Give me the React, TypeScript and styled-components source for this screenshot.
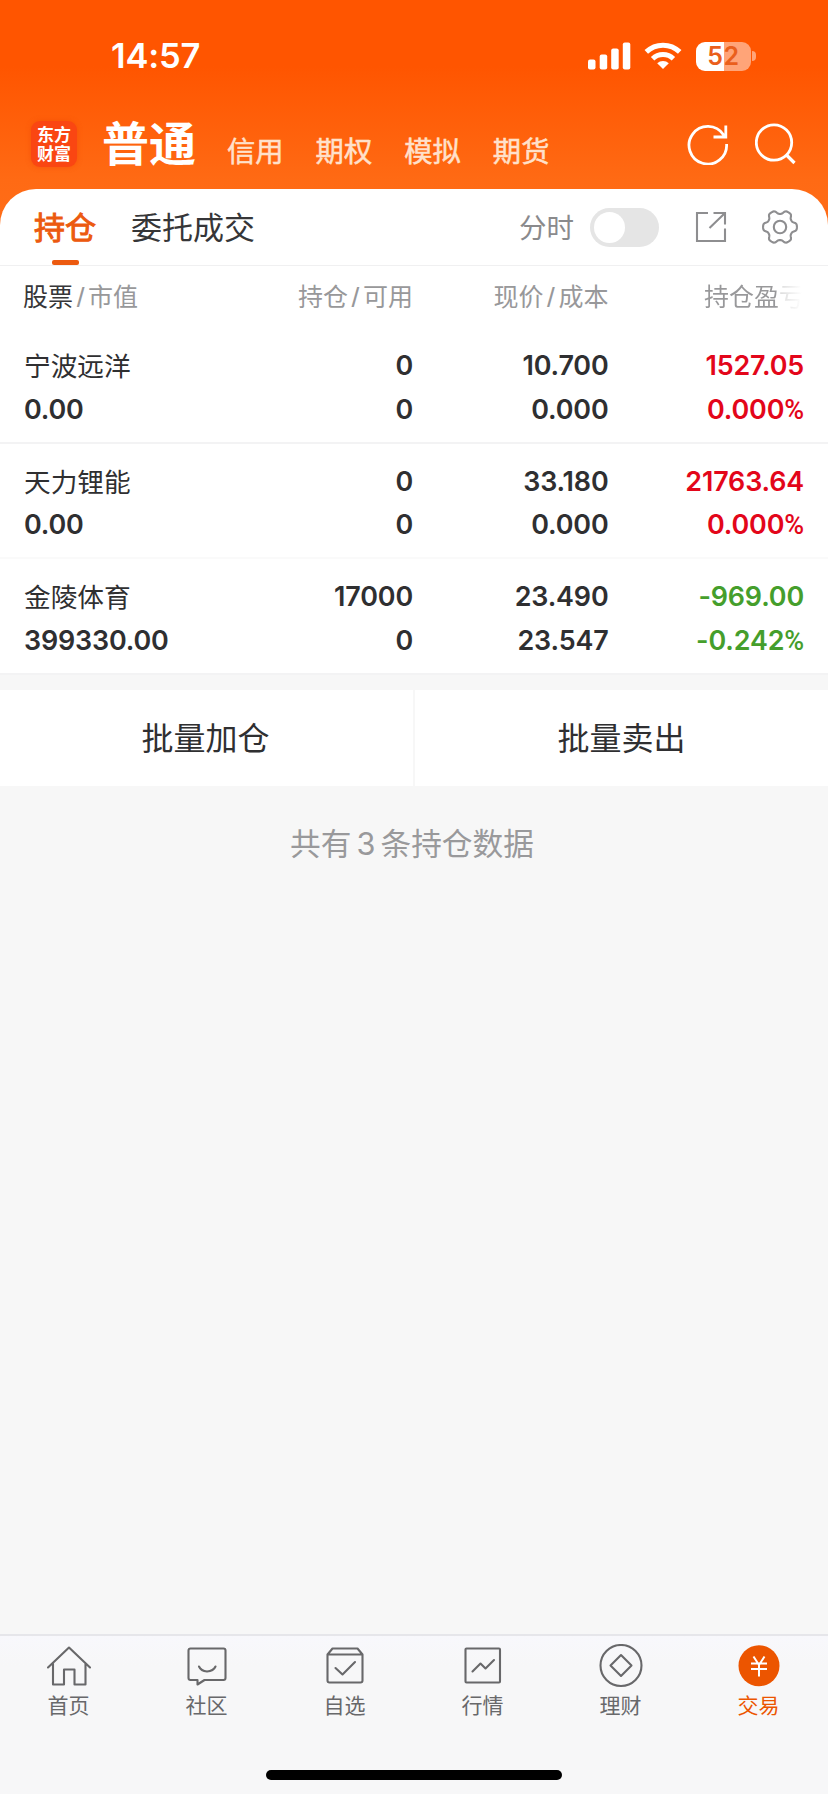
import React from 'react';
import styled, { createGlobalStyle } from 'styled-components';

const GlobalStyle = createGlobalStyle`
  * { box-sizing: border-box; }
  body {
    margin: 0;
    background: #f7f7f8;
    font-family: Inter, "Noto Sans CJK SC", sans-serif;
    color: #2f2f31;
  }
`;

const Screen = styled.div`
  width: 828px;
  height: 1794px;
  display: flex;
  flex-direction: column;
  background: #f7f7f7;
  overflow: hidden;
`;

const Hero = styled.header`
  height: 225px;
  margin-bottom: -36px;
  flex: none;
  background: linear-gradient(#ff5500 0, #ff5500 66px, #ff6a14 180px, #ff6d18 225px);
  color: #fff;
`;

const StatusBar = styled.div`
  height: 112px;
  padding: 0 72px 0 111px;
  display: flex;
  align-items: center;
  justify-content: space-between;
`;

const Clock = styled.span`
  font-size: 34.5px;
  font-weight: 600;
  line-height: 40px;
  letter-spacing: -0.2px;
`;

const StatusIcons = styled.div`
  display: flex;
  align-items: center;
  height: 30px;
`;

const Signal = styled.svg`
  display: block;
  margin-right: 13px;
`;

const Wifi = styled.svg`
  display: block;
  margin-right: 14px;
`;

const Battery = styled.div`
  width: 55px;
  height: 29px;
  border-radius: 9px;
  background: linear-gradient(90deg, #fff 0 28px, #ffa478 28px);
  color: #ea5f1c;
  font-size: 25px;
  font-weight: 600;
  line-height: 29px;
  text-align: center;
  letter-spacing: 0.6px;
`;

const BatteryCap = styled.span`
  width: 4px;
  height: 10px;
  margin-left: 1px;
  border-radius: 0 5px 5px 0;
  background: #ffa478;
`;

const AccountBar = styled.div`
  height: 77px;
  padding: 0 31px;
  display: flex;
  align-items: center;
`;

const Logo = styled.div`
  width: 46px;
  height: 46px;
  margin-top: -13px;
  border-radius: 9px;
  background: #fa4612;
  box-shadow: 0 0 5px rgba(235, 70, 5, 0.5);
  display: flex;
  flex-direction: column;
  align-items: center;
  justify-content: center;
  padding-top: 1px;
  font-size: 17px;
  font-weight: 700;
  line-height: 19px;
`;

const ActiveAccount = styled.span`
  margin: -14px 0 0 25px;
  font-size: 47px;
  line-height: 60px;
  font-weight: 700;
`;

const Account = styled.span<{ $first?: boolean }>`
  margin: 2px 0 0 ${(p) => (p.$first ? 31 : 32)}px;
  font-size: 28.3px;
  line-height: 36px;
  color: #ffe1cb;
  -webkit-text-stroke: 0.5px #ffe1cb;
`;

const HeroActions = styled.div`
  margin: -13px 0 0 auto;
  display: flex;
  gap: 26px;
  svg { display: block; }
`;

const Panel = styled.main`
  flex: none;
  background: #fff;
  border-radius: 36px 36px 0 0;
  overflow: hidden;
`;

const Toolbar = styled.nav`
  height: 77px;
  padding: 0 30px 0 34px;
  display: flex;
  align-items: center;
  border-bottom: 1px solid #f0f0f1;
`;

const ToolTab = styled.div<{ $active?: boolean }>`
  height: 76px;
  margin-right: 35px;
  display: flex;
  flex-direction: column;
  align-items: center;
  font-size: 31px;
  line-height: 78px;
  color: ${(p) => (p.$active ? '#ec5a10' : '#363638')};
  -webkit-text-stroke: ${(p) => (p.$active ? '1px #ec5a10' : '0')};
  &::after {
    content: '';
    display: ${(p) => (p.$active ? 'block' : 'none')};
    width: 27px;
    height: 5px;
    margin-top: -7px;
    border-radius: 2px;
    background: #ec5a10;
    flex: none;
  }
`;

const ToolLabel = styled.span`
  margin-left: auto;
  margin-top: 2px;
  font-size: 27.5px;
  line-height: 36px;
  color: #8a8a8c;
`;

const Toggle = styled.div`
  width: 69px;
  height: 39px;
  margin-left: 16px;
  padding: 4px;
  border-radius: 20px;
  background: #e5e5e5;
  &::before {
    content: '';
    display: block;
    width: 31px;
    height: 31px;
    border-radius: 50%;
    background: #fff;
  }
`;

const ToolIcon = styled.svg<{ $gap: number }>`
  display: block;
  margin-left: ${(p) => p.$gap}px;
`;

const Row = styled.div<{ $head?: boolean; $faint?: boolean }>`
  height: ${(p) => (p.$head ? 62 : 115.5)}px;
  padding: ${(p) => (p.$head ? 0 : '16px')} 24px 0;
  display: grid;
  grid-template-columns: 200px 189px 195.5px 195.5px;
  align-content: ${(p) => (p.$head ? 'center' : 'start')};
  border-bottom: ${(p) => (p.$head ? 0 : 2)}px solid ${(p) => (p.$faint ? '#fafafa' : '#f3f3f4')};
`;

const HeadCell = styled.div<{ $right?: boolean }>`
  display: flex;
  justify-content: ${(p) => (p.$right ? 'flex-end' : 'flex-start')};
  font-size: 25px;
  line-height: 37px;
  color: #98989a;
`;

const Strong = styled.span`
  color: #363638;
  margin-left: -1px;
`;

const Slash = styled.span`
  width: 15px;
  text-align: center;
  font-family: "Liberation Sans", sans-serif;
  font-size: 28px;
`;

const Fading = styled.span`
  color: transparent;
  background: linear-gradient(90deg, #98989a 0 72px, #dedede 77px, #fff 98px);
  background-clip: text;
`;

const Cell = styled.div<{ $tone?: 'up' | 'down'; $left?: boolean }>`
  display: flex;
  flex-direction: column;
  text-align: ${(p) => (p.$left ? 'left' : 'right')};
  font-size: 26.9px;
  line-height: 43.5px;
  font-weight: 600;
  letter-spacing: -0.15px;
  white-space: nowrap;
  color: ${(p) => (p.$tone === 'up' ? '#e3061a' : p.$tone === 'down' ? '#459e2c' : '#2f2f31')};
`;

const Percent = styled.span`
  font-family: Roboto, sans-serif;
  font-size: 27px;
  font-weight: 500;
`;

const StockName = styled.span`
  font-size: 26.7px;
  font-weight: 400;
  letter-spacing: 0;
  position: relative;
  top: 1px;
`;

const Actions = styled.div`
  flex: none;
  margin-top: 15px;
  height: 96px;
  display: grid;
  grid-template-columns: 413px 413px;
  gap: 2px;
`;

const ActionButton = styled.button`
  border: 0;
  padding: 3px 2px 0 0;
  background: #fff;
  font: 400 32px/44px Inter, "Noto Sans CJK SC", sans-serif;
  color: #2f2f31;
  & + & { padding-right: 0; }
`;

const Summary = styled.p`
  flex: 1;
  margin: 0;
  padding: 36px 4px 0 0;
  text-align: center;
  font-size: 30.7px;
  line-height: 44px;
  color: #99999b;
`;

const Count = styled.span`
  margin: 0 5px;
`;

const BottomNav = styled.footer`
  height: 160px;
  flex: none;
  border-top: 2px solid #e6e6ea;
  background: linear-gradient(#f8f8fc, #f7f7f8 30px);
  display: flex;
  flex-direction: column;
  align-items: center;
`;

const NavItems = styled.div`
  width: 100%;
  height: 134px;
  display: flex;
`;

const NavItem = styled.div<{ $active?: boolean }>`
  flex: 1;
  display: flex;
  flex-direction: column;
  align-items: center;
  padding-top: 8px;
  font-size: 21px;
  line-height: 30px;
  color: ${(p) => (p.$active ? '#ec5500' : '#68686a')};
  svg { display: block; margin-bottom: 1px; }
  span { margin-right: 1px; }
`;

const HomeIndicator = styled.div`
  width: 296px;
  height: 10px;
  border-radius: 5px;
  background: #000;
`;

const gearPath =
  Array.from({ length: 120 }, (_, i) => {
    const t = (i / 120) * Math.PI * 2;
    const r = 14.9 + 2.1 * Math.tanh(1.7 * (Math.cos(6 * t) + 0.2));
    return `${i ? 'L' : 'M'}${(18 + r * Math.cos(t)).toFixed(2)} ${(18 + r * Math.sin(t)).toFixed(2)}`;
  }).join('') + 'Z';

type NavIconProps = { children: React.ReactNode };
const NavIcon = ({ children }: NavIconProps) => (
  <svg width="46" height="46" viewBox="0 0 46 46" fill="none" stroke="#68686a" strokeWidth="2.1" strokeLinejoin="round" strokeLinecap="round">
    {children}
  </svg>
);

const navItems = [
  { label: '首页', icon: <path d="M2 23.500 23 3.500 44 23.500M7 19.500V40.500H18V25.500H28.500V40.500H39.500V19.500" /> },
  { label: '社区', icon: <path d="M6.500 4.500H39.500Q41.500 4.500 41.500 6.500V34Q41.500 36 39.500 36H20.500L13.500 40.500V36H6.500Q4.500 36 4.500 34V6.500Q4.500 4.500 6.500 4.500ZM15 22.500Q17 27 23 27.500Q29.500 27 31.500 22.500" /> },
  { label: '自选', icon: <path d="M5.500 10.500 10.500 4.500H35.500L40.500 10.500V36.500Q40.500 38.500 38.500 38.500H7.500Q5.500 38.500 5.500 36.500ZM5.500 10.500H40.500M13.500 24 20.500 30.500 33 18" /> },
  { label: '行情', icon: <><rect x="5.500" y="4.500" width="34.500" height="34" rx="1" /><path d="M12.500 27.500 20.500 19.500 25.500 24.500 34 16" /></> },
  { label: '理财', icon: <><circle cx="23" cy="21.500" r="20.500" /><path d="M23 11 33.500 21.500 23 32 12.500 21.500Z" /></> },
  { label: '交易', icon: <><circle cx="23" cy="21.700" r="20.500" fill="#ec5500" stroke="none" /><path d="M17.500 12.500 23 21 28.500 12.500M23 21V32.500M15 19.500H31M15 25H31" stroke="#fff" strokeWidth="2" strokeLinecap="butt" /></> },
];

type Holding = {
  name: string; value: string; held: string; free: string;
  price: string; cost: string; profit: string; rate: string; tone: 'up' | 'down';
};

const holdings: Holding[] = [
  { name: '宁波远洋', value: '0.00', held: '0', free: '0', price: '10.700', cost: '0.000', profit: '1527.05', rate: '0.000', tone: 'up' },
  { name: '天力锂能', value: '0.00', held: '0', free: '0', price: '33.180', cost: '0.000', profit: '21763.64', rate: '0.000', tone: 'up' },
  { name: '金陵体育', value: '399330.00', held: '17000', free: '0', price: '23.490', cost: '23.547', profit: '-969.00', rate: '-0.242', tone: 'down' },
];

export default function App() {
  return (
    <>
      <GlobalStyle />
      <Screen>
        <Hero>
          <StatusBar>
            <Clock>14:57</Clock>
            <StatusIcons>
              <Signal width="43" height="28" viewBox="0 0 43 28" fill="#fff">
                <rect x="0" y="17.500" width="7.500" height="10" rx="2" />
                <rect x="11.700" y="12.500" width="7.500" height="15" rx="2" />
                <rect x="23.200" y="6.500" width="7.500" height="21" rx="2" />
                <rect x="34.800" y="0.500" width="7.500" height="27" rx="2" />
              </Signal>
              <Wifi width="38" height="28" viewBox="0 0 38 28" fill="none" stroke="#fff" strokeWidth="5">
                <path d="M2.300 9.900A24 24 0 0 1 35.700 9.900" />
                <path d="M8.600 16.700A15 15 0 0 1 29.400 16.700" />
                <path d="M19 27 13.200 21.200A8.500 8.500 0 0 1 24.800 21.200Z" fill="#fff" stroke="none" />
              </Wifi>
              <Battery>52</Battery>
              <BatteryCap />
            </StatusIcons>
          </StatusBar>
          <AccountBar>
            <Logo><span>东方</span><span>财富</span></Logo>
            <ActiveAccount>普通</ActiveAccount>
            <Account $first>信用</Account>
            <Account>期权</Account>
            <Account>模拟</Account>
            <Account>期货</Account>
            <HeroActions>
              <svg width="42" height="42" viewBox="0 0 42 42" fill="none" stroke="#fff" strokeWidth="2.800">
                <path d="M39.600 21A18.800 18.800 0 1 1 36.500 11.800L38 14M38.800 2.500V14H26.500" />
              </svg>
              <svg width="42" height="42" viewBox="0 0 42 42" fill="none" stroke="#fff" strokeWidth="2.800">
                <circle cx="19" cy="19.500" r="17.700" />
                <path d="M31.500 32 39.500 40" strokeWidth="3.200" />
              </svg>
            </HeroActions>
          </AccountBar>
        </Hero>

        <Panel>
          <Toolbar>
            <ToolTab $active>持仓</ToolTab>
            <ToolTab>委托成交</ToolTab>
            <ToolLabel>分时</ToolLabel>
            <Toggle />
            <ToolIcon $gap={36} width="32" height="32" viewBox="0 0 32 32" fill="none" stroke="#8e8e90" strokeWidth="2.100">
              <path d="M13 2H2V30H30V17.500M18.500 2H30V13.500M30 2 14.500 17" />
            </ToolIcon>
            <ToolIcon $gap={35} width="36" height="36" viewBox="0 0 36 36" fill="none" stroke="#8e8e90" strokeWidth="2.100">
              <path d={gearPath} strokeLinejoin="round" />
              <circle cx="18" cy="18" r="6.200" />
            </ToolIcon>
          </Toolbar>
          <Row $head>
            <HeadCell><Strong>股票</Strong><Slash>/</Slash>市值</HeadCell>
            <HeadCell $right>持仓<Slash>/</Slash>可用</HeadCell>
            <HeadCell $right>现价<Slash>/</Slash>成本</HeadCell>
            <HeadCell $right><Fading>持仓盈亏</Fading></HeadCell>
          </Row>
          {holdings.map((h, i) => (
            <Row key={h.name} $faint={i === 1}>
              <Cell $left><StockName>{h.name}</StockName><span>{h.value}</span></Cell>
              <Cell><span>{h.held}</span><span>{h.free}</span></Cell>
              <Cell><span>{h.price}</span><span>{h.cost}</span></Cell>
              <Cell $tone={h.tone}><span>{h.profit}</span><span>{h.rate}<Percent>%</Percent></span></Cell>
            </Row>
          ))}
        </Panel>

        <Actions>
          <ActionButton>批量加仓</ActionButton>
          <ActionButton>批量卖出</ActionButton>
        </Actions>
        <Summary>共有<Count>3</Count>条持仓数据</Summary>

        <BottomNav>
          <NavItems>
            {navItems.map((item) => (
              <NavItem key={item.label} $active={item.label === '交易'}>
                <NavIcon>{item.icon}</NavIcon>
                <span>{item.label}</span>
              </NavItem>
            ))}
          </NavItems>
          <HomeIndicator />
        </BottomNav>
      </Screen>
    </>
  );
}
